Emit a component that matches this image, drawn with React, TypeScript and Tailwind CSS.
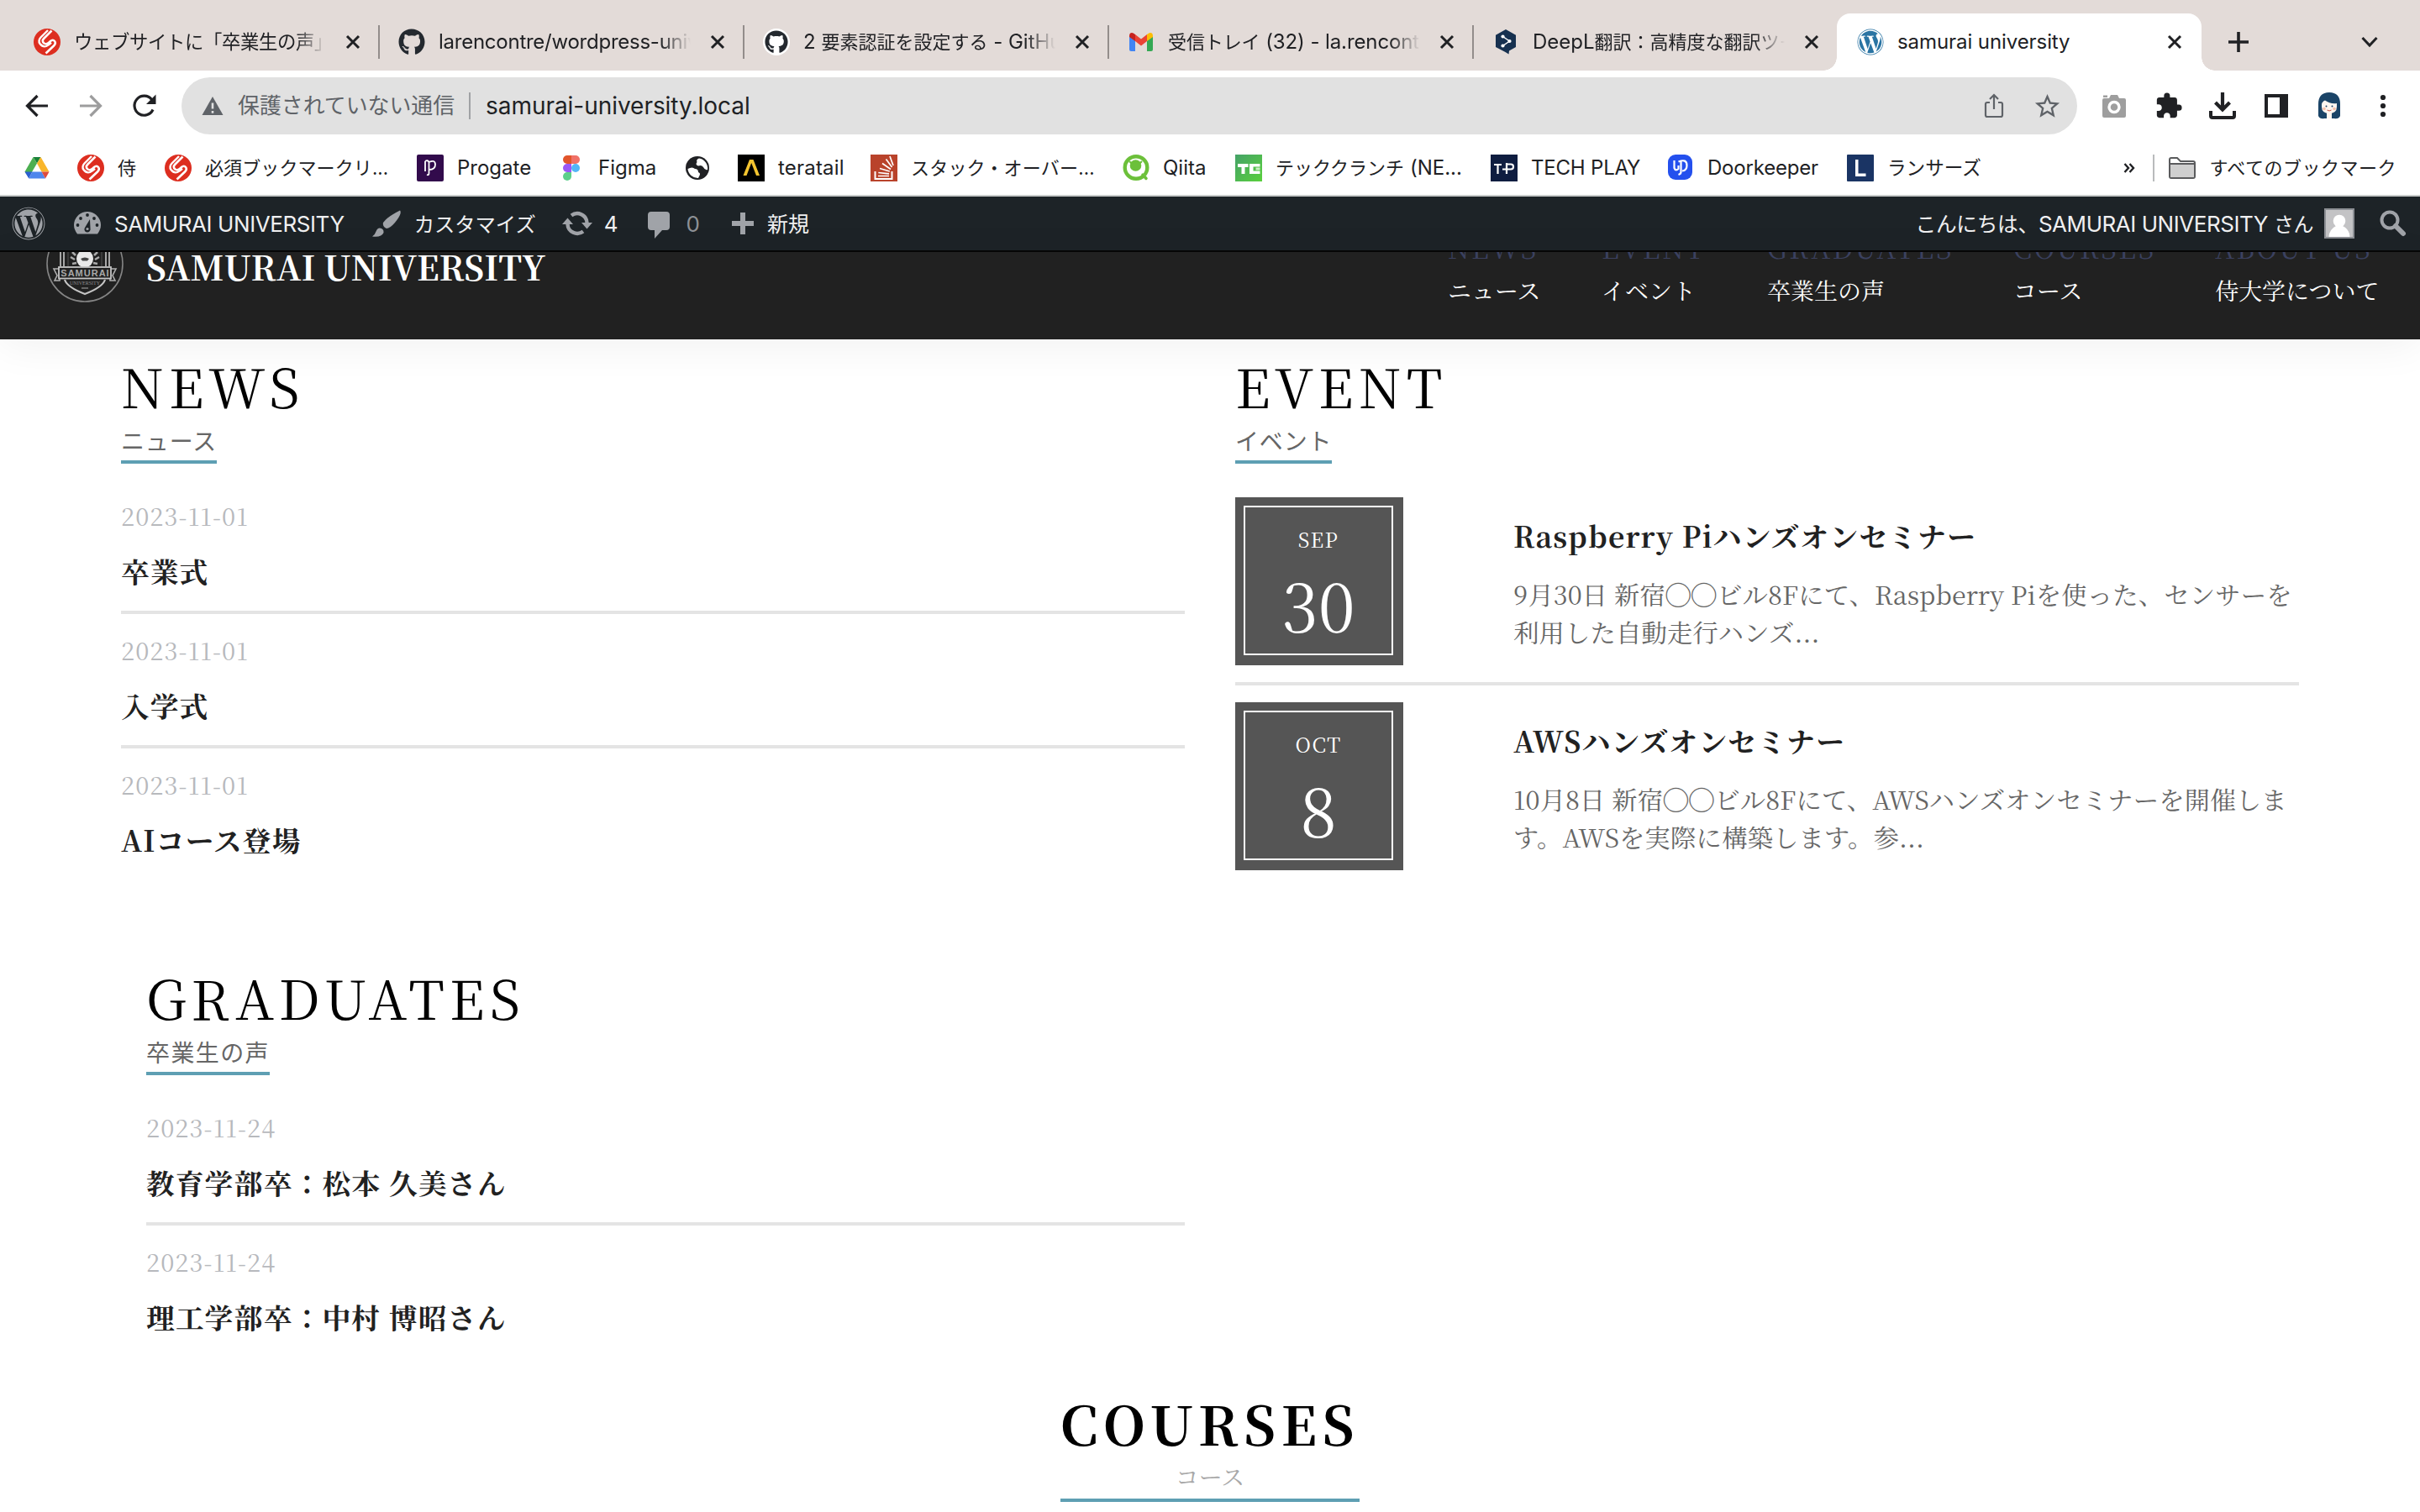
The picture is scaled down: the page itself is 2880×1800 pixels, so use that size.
import type { ReactNode } from "react";
import { FaWordpress, FaGithub } from "react-icons/fa";
import { MdExtension, MdStarBorder } from "react-icons/md";

const SERIF = "font-['Noto_Serif_JP','Noto_Serif_CJK_JP','Liberation_Serif',serif]";
const SANS = "font-['Inter','Noto_Sans_CJK_JP',sans-serif]";

function J({ children }: { children: ReactNode }) {
  return <span className="text-[22px]">{children}</span>;
}

/* ---------- favicons ---------- */

function SamuraiIcon() {
  return (
    <svg viewBox="0 0 32 32" className="size-8 shrink-0">
      <circle cx="16" cy="16" r="16" fill="#dd2e20" />
      <path
        d="M21.500 2.500 L12.500 11.500 Q9 15 12.500 17.500 Q15.500 19.500 18.500 16.500 L20 15 Q23 12.500 25 15 Q27 17.500 24 20.500 L14.500 29.500"
        fill="none"
        stroke="#fff"
        strokeWidth="2.600"
      />
      <path d="M17 2 L8.500 10.500 Q5 14.500 7.500 18 Q11 22.500 15 21 Q18 19.500 21 16.800" fill="none" stroke="#fff" strokeWidth="2.400" />
    </svg>
  );
}

function GmailIcon() {
  return (
    <svg viewBox="0 0 32 32" className="size-8 shrink-0">
      <path d="M2 9 L9 14.500 V27 H4 Q2 27 2 25 Z" fill="#4285f4" />
      <path d="M30 9 L23 14.500 V27 H28 Q30 27 30 25 Z" fill="#34a853" />
      <path d="M9 7 L16 12.500 L23 7 V15 L16 20.500 L9 15 Z" fill="#ea4335" />
      <path d="M2 9 Q2 5 5 5 Q6.500 5 9 7 V15 L2 10 Z" fill="#c5221f" />
      <path d="M30 9 Q30 5 27 5 Q25.500 5 23 7 V15 L30 10 Z" fill="#fbbc04" />
    </svg>
  );
}

function DeeplIcon() {
  return (
    <svg viewBox="0 0 32 32" className="size-8 shrink-0">
      <path d="M16 1 L28 7.800 V22 L20 26.500 L19.500 30.500 L15.500 28 L4 22 V7.800 Z" fill="#16304f" />
      <path d="M12.500 9.500 L20.500 15 L12.500 20.500" fill="none" stroke="#fff" strokeWidth="1.500" />
      <circle cx="12.500" cy="9.500" r="2.100" fill="#fff" />
      <circle cx="20.500" cy="15" r="2.100" fill="#fff" />
      <circle cx="12.500" cy="20.500" r="2.100" fill="#fff" />
    </svg>
  );
}

function GithubBadge() {
  return (
    <span className="flex size-8 shrink-0 items-center justify-center rounded-full bg-white">
      <FaGithub className="size-[28px] text-[#24292f]" />
    </span>
  );
}

function DriveIcon() {
  return (
    <svg viewBox="0 0 32 32" className="size-8 shrink-0">
      <path d="M11.500 3 H20.500 L16 10.500 Z" fill="#188038" />
      <path d="M11.500 3 L16 10.500 L6.300 27 L1.500 20.500 Z" fill="#4caf50" />
      <path d="M20.500 3 L30.500 20.500 H21.500 L16 10.500 Z" fill="#f9b62b" />
      <path d="M1.500 20.500 H10.300 L6.300 28.500 Z" fill="#2b5fd0" />
      <path d="M10.300 20.500 H21.500 L26 28.500 H6.300 Z" fill="#4f86ec" />
      <path d="M21.500 20.500 H30.500 L26 28.500 Z" fill="#dd4b3e" />
    </svg>
  );
}

function ProgateIcon() {
  return (
    <svg viewBox="0 0 32 32" className="size-8 shrink-0">
      <rect width="32" height="32" rx="2" fill="#320b4c" />
      <path
        d="M10 8 V20 M10 8 Q13 6 14.500 9 V22 Q14.500 25 12 24 M14.500 9 Q22 5.500 22 12 Q22 18 14.500 18"
        fill="none"
        stroke="#fff"
        strokeWidth="1.800"
      />
    </svg>
  );
}

function FigmaIcon() {
  return (
    <svg viewBox="0 0 32 32" className="size-8 shrink-0">
      <path d="M16 1 H11 A5 5 0 0 0 11 11 H16 Z" fill="#e2552b" />
      <path d="M16 1 H21 A5 5 0 0 1 21 11 H16 Z" fill="#f07067" />
      <path d="M16 11 H11 A5 5 0 0 0 11 21 H16 Z" fill="#9a57f5" />
      <circle cx="21" cy="16" r="5" fill="#52b6f7" />
      <path d="M16 21 H11 A5 5 0 1 0 16 26 Z" fill="#5ccf8a" />
    </svg>
  );
}

function GlobeIcon() {
  return (
    <svg viewBox="0 0 32 32" className="size-8 shrink-0">
      <circle cx="16" cy="16" r="14" fill="#202124" />
      <path d="M4.500 17 Q10 14 13 17 Q17 17 17 21 Q20 22 18.500 25 L17 28 A12 12 0 0 1 4.500 17 Z" fill="#fff" />
      <path d="M18 4.500 Q14 6 15.500 9 Q13 12 17 13.500 Q21 12 23 15 Q25 19 28 18 A12 12 0 0 0 18 4.500 Z" fill="#fff" />
    </svg>
  );
}

function TeratailIcon() {
  return (
    <svg viewBox="0 0 32 32" className="size-8 shrink-0">
      <rect width="32" height="32" fill="#000" />
      <path d="M14 6 H18.500 L26 25 H22 L16.200 10 L10.500 25 H6.500 Z" fill="#f4c430" />
    </svg>
  );
}

function StackIcon() {
  return (
    <svg viewBox="0 0 32 32" className="size-8 shrink-0">
      <rect width="32" height="32" fill="#b9432b" />
      <path d="M5.500 20 V29 H25.500 V20" fill="none" stroke="#fff" strokeWidth="2" />
      <path d="M9 25.500 H22 M9.300 21.500 L22 22.800 M11 16.500 L22.800 20 M14 10.500 L24 17.500 M18.500 5.500 L25.500 15 M23 2 L27 13" stroke="#fff" strokeWidth="1.700" />
    </svg>
  );
}

function QiitaIcon() {
  return (
    <svg viewBox="0 0 32 32" className="size-8 shrink-0">
      <circle cx="16" cy="15.500" r="13.300" fill="none" stroke="#6cc03a" strokeWidth="4.400" />
      <circle cx="15.500" cy="13" r="6.800" fill="#6cc03a" />
      <path d="M8 8 L12 12 M23 8 L19 12" stroke="#6cc03a" strokeWidth="2" />
      <path d="M22.500 22 L29 29" stroke="#fff" strokeWidth="2.500" />
      <path d="M24 24 L28 28.500" stroke="#6cc03a" strokeWidth="3.500" strokeLinecap="round" />
    </svg>
  );
}

function TechCrunchIcon() {
  return (
    <svg viewBox="0 0 32 32" className="size-8 shrink-0">
      <defs>
        <linearGradient id="tc" x1="0" y1="0" x2="1" y2="1">
          <stop offset="0" stopColor="#45a268" />
          <stop offset="1" stopColor="#59d03c" />
        </linearGradient>
      </defs>
      <rect width="32" height="32" fill="url(#tc)" />
      <path d="M3 11 H15.500 V15 H11.500 V23 H7.500 V15 H3 Z M17 11 H29.500 V14.500 H21.500 V19.500 H29.500 V23 H17 Z" fill="#fff" />
      <rect x="24.500" y="15.500" width="5" height="3" fill="#c9efc4" />
    </svg>
  );
}

function TechPlayIcon() {
  return (
    <svg viewBox="0 0 32 32" className="size-8 shrink-0">
      <rect width="32" height="32" fill="#0f1d40" />
      <path d="M4 12 H13 M8.500 12 V23 M19 10 V23 M19 11.500 H24 Q27 11.500 27 14.500 Q27 17.500 24 17.500 H14" fill="none" stroke="#fff" strokeWidth="2.200" />
    </svg>
  );
}

function DoorkeeperIcon() {
  return (
    <svg viewBox="0 0 32 32" className="size-8 shrink-0">
      <rect x="1" y="0" width="29" height="30" rx="9" fill="#2450ee" />
      <path d="M8.500 7 V16 Q10 20 13.500 17 V13 M16.500 7 V21 Q16.500 23 13.500 24 M13.500 8.500 Q23.500 4.500 23.500 13 Q23.500 19 18 19.500" fill="none" stroke="#fff" strokeWidth="2.200" />
    </svg>
  );
}

function LancersIcon() {
  return (
    <svg viewBox="0 0 32 32" className="size-8 shrink-0">
      <rect width="32" height="32" rx="1" fill="#1a3464" />
      <path d="M10 6 H13.500 V22.500 H22.500 V26 H10 Z" fill="#fff" />
    </svg>
  );
}

/* ---------- tab strip ---------- */

function CloseIcon() {
  return (
    <svg viewBox="0 0 18 18" className="size-[18px] shrink-0">
      <path d="M2 2 L16 16 M16 2 L2 16" stroke="#202124" strokeWidth="3" />
    </svg>
  );
}

const tabs: { icon: ReactNode; title: ReactNode }[] = [
  { icon: <SamuraiIcon />, title: <span className="text-[22.400px] tracking-[-0.400px]">ウェブサイトに「卒業生の声」</span> },
  { icon: <FaGithub className="size-8 shrink-0 text-[#24292f]" />, title: <span className="tracking-[-0.250px]">larencontre/wordpress-university</span> },
  { icon: <GithubBadge />, title: <>2 <J>要素認証を設定する</J> - GitHub Docs</> },
  { icon: <GmailIcon />, title: <span className="tracking-[-0.100px]"><J>受信トレイ</J> (32) - la.rencontre</span> },
  { icon: <DeeplIcon />, title: <>DeepL<J>翻訳：高精度な翻訳ツール</J></> },
];

function TabStrip() {
  return (
    <div className="flex h-[84px] items-end bg-[#e3dbd8] pl-4 text-[24px] leading-none text-[#202124]">
      {tabs.map((tab, i) => (
        <div key={i} className="flex h-[68px] w-[434px] shrink-0 items-center pl-6">
          {tab.icon}
          <div className="ml-4 w-[300px] shrink-0 overflow-hidden py-1 whitespace-nowrap [mask-image:linear-gradient(to_right,black_88%,transparent)]">
            {tab.title}
          </div>
          <div className="ml-[23px] flex shrink-0">
            <CloseIcon />
          </div>
          {i < 4 && <div className="-mr-1 ml-[21px] h-10 w-[2px] shrink-0 bg-[#938d8b]" />}
        </div>
      ))}
      <div className="relative flex h-[68px] w-[434px] shrink-0 items-center rounded-t-2xl bg-white pl-6">
        <div className="absolute bottom-0 -left-4 size-4 bg-[radial-gradient(circle_at_top_left,transparent_15.500px,white_16px)]" />
        <div className="absolute -right-4 bottom-0 size-4 bg-[radial-gradient(circle_at_top_right,transparent_15.500px,white_16px)]" />
        <FaWordpress className="size-8 shrink-0 text-[#2a74a3]" />
        <div className="ml-4 flex-1 tracking-[-0.080px]">samurai university</div>
        <div className="mr-[23px] flex">
          <CloseIcon />
        </div>
      </div>
      <div className="flex h-[68px] flex-1 items-center justify-between pr-[50px] pl-[31px]">
        <svg viewBox="0 0 26 26" className="size-[26px]">
          <path d="M13 1 V25 M1 13 H25" stroke="#202124" strokeWidth="3.600" />
        </svg>
        <svg viewBox="0 0 20 14" className="h-[14px] w-5">
          <path d="M1.500 2 L10 11 L18.500 2" fill="none" stroke="#202124" strokeWidth="3" />
        </svg>
      </div>
    </div>
  );
}

/* ---------- toolbar ---------- */

function Toolbar() {
  return (
    <div className="flex h-[84px] items-center bg-white pr-7 pl-[28px]">
      <svg viewBox="0 0 32 32" className="size-8">
        <path d="M29 16 H5 M16.500 4 L4.500 16 L16.500 28" fill="none" stroke="#202124" strokeWidth="3.200" />
      </svg>
      <svg viewBox="0 0 32 32" className="ml-8 size-8">
        <path d="M3 16 H27 M15.500 4 L27.500 16 L15.500 28" fill="none" stroke="#9d9d9e" strokeWidth="3.200" />
      </svg>
      <svg viewBox="0 0 32 32" className="ml-8 size-8">
        <path d="M26 20.500 A11.500 11.500 0 1 1 24.500 8.500" fill="none" stroke="#202124" strokeWidth="3.200" />
        <path d="M29.500 2.500 V14 H18 Z" fill="#202124" />
      </svg>
      <div className="ml-[28px] flex h-[68px] w-[2256px] items-center rounded-full bg-[#e1e1e1] pr-[18px] pl-6 text-[28px] leading-none text-[#202124]">
        <svg viewBox="0 0 26 22" className="h-[22px] w-[26px]">
          <path d="M13 0 L25.500 22 H0.500 Z" fill="#5f6368" />
          <path d="M13 7.500 V14.500 M13 17 V19.700" stroke="#e1e1e1" strokeWidth="2.600" />
        </svg>
        <span className="ml-[17px] w-[258px] text-[25.900px] whitespace-nowrap text-[#5f6368]">保護されていない通信</span>
        <div className="ml-[17px] h-8 w-[2px] bg-[#a0a2a5]" />
        <span className="ml-[18px] flex-1 tracking-[-0.040px]">samurai-university.local</span>
        <svg viewBox="0 0 32 32" className="size-8">
          <path d="M11 12 H8 Q6 12 6 14 V27 Q6 29 8 29 H24 Q26 29 26 27 V14 Q26 12 24 12 H21" fill="none" stroke="#5f6368" strokeWidth="2.200" />
          <path d="M16 20 V3 M11 8 L16 3 L21 8" fill="none" stroke="#5f6368" strokeWidth="2.200" />
        </svg>
        <MdStarBorder className="ml-[30px] size-[35px] text-[#5f6368]" />
      </div>
      <div className="ml-[28px] flex flex-1 items-center justify-between">
        <svg viewBox="0 0 32 32" className="size-8">
          <path d="M2 9 Q2 7 4 7 H10 L12 3 H20 L22 7 H28 Q30 7 30 9 V28 Q30 30 28 30 H4 Q2 30 2 28 Z" fill="#9e9e9e" />
          <path d="M3 3.500 H8 V6 H3 Z" fill="#9e9e9e" />
          <circle cx="16" cy="17.500" r="6" fill="none" stroke="#fff" strokeWidth="3.400" />
        </svg>
        <MdExtension className="size-[34px] text-[#202124]" />
        <svg viewBox="0 0 32 32" className="size-8">
          <path d="M16 0 V19 M7.500 12 L16 20.500 L24.500 12" fill="none" stroke="#202124" strokeWidth="4.200" />
          <path d="M2 22 V28 Q2 30 4 30 H28 Q30 30 30 28 V22" fill="none" stroke="#202124" strokeWidth="4" />
        </svg>
        <svg viewBox="0 0 32 32" className="size-8">
          <path d="M2 2 H30 V30 H2 Z M6 6 V26 H20 V6 Z" fill="#202124" fillRule="evenodd" />
        </svg>
        <svg viewBox="0 0 32 32" className="size-8">
          <path d="M3 28 V14 Q3 0 16 0 Q29 0 29 14 V28 Q27 32 22 31 H10 Q5 32 3 28 Z" fill="#1b4467" />
          <path d="M7 14 Q7.500 11 11 9.500 Q17 14 25 13 V17 Q25 25 16 25 Q7 25 7 17 Z" fill="#fff6f0" />
          <path d="M13 24 H19 V31 H13 Z" fill="#fff6f0" />
          <circle cx="12.500" cy="16.500" r="1" fill="#1b4467" />
          <circle cx="19.500" cy="16.500" r="1" fill="#1b4467" />
          <circle cx="10" cy="19.500" r="1.800" fill="#f6c2ab" />
          <circle cx="22" cy="19.500" r="1.800" fill="#f6c2ab" />
          <path d="M13.500 21 Q16 23 18.500 21" stroke="#c7523f" strokeWidth="1" fill="none" />
        </svg>
        <svg viewBox="0 0 32 32" className="size-8">
          <circle cx="16" cy="6" r="3.100" fill="#202124" />
          <circle cx="16" cy="16" r="3.100" fill="#202124" />
          <circle cx="16" cy="26" r="3.100" fill="#202124" />
        </svg>
      </div>
    </div>
  );
}

/* ---------- bookmarks ---------- */

const bookmarks: { icon: ReactNode; label: ReactNode; width: string }[] = [
  { icon: <DriveIcon />, label: "", width: "w-[64px]" },
  { icon: <SamuraiIcon />, label: <J>侍</J>, width: "w-[104px]" },
  { icon: <SamuraiIcon />, label: <span className="text-[22px] tracking-[0.100px]">必須ブックマークリ...</span>, width: "w-[300px]" },
  { icon: <ProgateIcon />, label: "Progate", width: "w-[168px]" },
  { icon: <FigmaIcon />, label: "Figma", width: "w-[150px]" },
  { icon: <GlobeIcon />, label: "", width: "w-[64px]" },
  { icon: <TeratailIcon />, label: <span className="tracking-[0.200px]">teratail</span>, width: "w-[158px]" },
  { icon: <StackIcon />, label: <span className="text-[22px] tracking-[0.200px]">スタック・オーバー...</span>, width: "w-[300px]" },
  { icon: <QiitaIcon />, label: "Qiita", width: "w-[134px]" },
  { icon: <TechCrunchIcon />, label: <><J>テッククランチ</J> (NE...</>, width: "w-[304px]" },
  { icon: <TechPlayIcon />, label: <span className="tracking-[-0.200px]">TECH PLAY</span>, width: "w-[210px]" },
  { icon: <DoorkeeperIcon />, label: <span className="tracking-[-0.200px]">Doorkeeper</span>, width: "w-[214px]" },
  { icon: <LancersIcon />, label: <span className="text-[22.600px]">ランサーズ</span>, width: "w-[170px]" },
];

function BookmarksBar() {
  return (
    <div className="flex h-[66px] items-center border-b-2 border-[#c9cccb] bg-white pr-7 pl-7 text-[24px] leading-none text-[#202124]">
      <div className="flex flex-1">
        {bookmarks.map((b, i) => (
          <div key={i} className={`flex shrink-0 items-center gap-4 whitespace-nowrap ${b.width}`}>
            {b.icon}
            <span>{b.label}</span>
          </div>
        ))}
      </div>
      <svg viewBox="0 0 14 14" className="size-[14px]">
        <path d="M1.500 2 L6 7 L1.500 12 M7.500 2 L12 7 L7.500 12" fill="none" stroke="#202124" strokeWidth="2.400" />
      </svg>
      <div className="ml-[21px] h-8 w-[2px] bg-[#b9bbbc]" />
      <svg viewBox="0 0 32 26" className="ml-[17px] h-[26px] w-8">
        <path d="M1 3 Q1 1 3 1 H10 L14 5 H29 Q31 5 31 7 V23 Q31 25 29 25 H3 Q1 25 1 23 Z" fill="#fff" stroke="#5a5b5d" strokeWidth="2" />
        <path d="M2 8 H30 V24 H2 Z" fill="#cfcfcf" />
        <path d="M1 8 H31" stroke="#5a5b5d" strokeWidth="2" />
      </svg>
      <span className="ml-4 text-[22px] tracking-[0.500px] whitespace-nowrap">すべてのブックマーク</span>
    </div>
  );
}

/* ---------- WordPress admin bar ---------- */

function AdminBar() {
  return (
    <div className="flex h-[66px] border-b-2 border-[#060607] bg-[#1d2327] text-[26px] leading-none text-[#f0f0f1]">
      <div className="flex flex-1 items-center pl-[14px]">
        <FaWordpress className="size-10 text-[#a0a3a8]" />
        <svg viewBox="0 0 32 28" className="ml-[34px] h-7 w-8">
          <path d="M4 26.500 Q0 21 0 16 A16 16 0 0 1 32 16 Q32 21 28 26.500 Z" fill="#a0a3a8" />
          <g fill="#1d2327">
            <circle cx="16" cy="4" r="1.900" />
            <circle cx="8" cy="8" r="1.900" />
            <circle cx="24" cy="8" r="1.900" />
            <circle cx="4.500" cy="16" r="1.900" />
            <circle cx="27.500" cy="16" r="1.900" />
            <path d="M19 9 L19.500 20 A3.600 3.600 0 1 1 13 19 Z" />
          </g>
          <circle cx="16" cy="20.500" r="1.600" fill="#a0a3a8" />
        </svg>
        <span className="ml-4 pt-[2px] tracking-[-0.420px]">SAMURAI UNIVERSITY</span>
        <svg viewBox="0 0 34 32" className="ml-[33px] h-8 w-[34px]">
          <path d="M33 0.500 Q36 4 27 15 Q21 22 17 22 Q12 20 13 15 Q18 8 33 0.500 Z" fill="#a0a3a8" />
          <path d="M9 21.500 Q14 22 13.500 27 Q11 33 0 31.500 Q3.500 29 4.500 25.500 Q6 21.500 9 21.500 Z" fill="#a0a3a8" />
        </svg>
        <span className="ml-4 pt-[2px] text-[24.300px]">カスタマイズ</span>
        <svg viewBox="0 0 36 30" className="ml-[31px] h-[30px] w-9">
          <path d="M11 5.500 A11.500 11.500 0 0 1 29.500 14" fill="none" stroke="#a0a3a8" strokeWidth="4.400" />
          <path d="M23 14 H36 L29.500 21.500 Z" fill="#a0a3a8" />
          <path d="M25 24.500 A11.500 11.500 0 0 1 6.500 16" fill="none" stroke="#a0a3a8" strokeWidth="4.400" />
          <path d="M0 16 H13 L6.500 8.500 Z" fill="#a0a3a8" />
        </svg>
        <span className="ml-[14px] pt-[2px]">4</span>
        <svg viewBox="0 0 26 32" className="mt-1 ml-[35px] h-8 w-[26px]">
          <path d="M4 0 H22 Q26 0 26 4 V18 Q26 22 22 22 H17 L8 32 V22 H4 Q0 22 0 18 V4 Q0 0 4 0 Z" fill="#a0a3a8" />
        </svg>
        <span className="ml-5 pt-[2px] text-[#8d9196]">0</span>
        <svg viewBox="0 0 26 26" className="ml-[38px] size-[26px]">
          <path d="M13 0 V26 M0 13 H26" stroke="#a0a3a8" strokeWidth="6" />
        </svg>
        <span className="ml-4 pt-[2px] text-[25px]">新規</span>
      </div>
      <div className="flex items-center pr-[16px]">
        <span className="pt-[2px] tracking-[-0.450px]">
          <span className="text-[24.700px] tracking-[-0.300px]">こんにちは、</span>SAMURAI UNIVERSITY <span className="text-[24px]">さん</span>
        </span>
        <svg viewBox="0 0 36 36" className="ml-[13px] size-9">
          <rect x="1" y="1" width="34" height="34" fill="#c3c3c5" stroke="#8c8f94" strokeWidth="2" />
          <circle cx="18" cy="15" r="7.300" fill="#fff" />
          <path d="M5.500 34 Q6 25 14 21 H22 Q30 25 30.500 34 Z" fill="#fff" />
        </svg>
        <svg viewBox="0 0 32 32" className="ml-[30px] size-8">
          <circle cx="12" cy="12" r="9.500" fill="none" stroke="#a0a3a8" strokeWidth="4" />
          <path d="M19 19 L28 28" stroke="#a0a3a8" strokeWidth="6" strokeLinecap="round" />
        </svg>
      </div>
    </div>
  );
}

/* ---------- site ---------- */

function Crest() {
  return (
    <svg viewBox="0 0 92 92" className="-mt-[32px] size-[92px]" fill="none">
      <circle cx="46" cy="46" r="45" stroke="#858585" strokeWidth="1.600" />
      <path d="M17 12 V49 M21 12 V49 M71 12 V49 M75 12 V49" stroke="#b5b5b5" strokeWidth="1.800" />
      <path d="M26 20 V49 M66 20 V49" stroke="#555" strokeWidth="1" />
      <ellipse cx="46" cy="40" rx="10" ry="10.500" fill="#e8e8e8" />
      <path d="M41 40 Q46 37 51 40 L49 42.500 H43 Z" fill="#444" />
      <path d="M31 32 L35 36 M29 38 L34 41 M31 46 L36 45 M61 32 L57 36 M63 38 L58 41 M61 46 L56 45" stroke="#aaa" strokeWidth="2.600" />
      <path d="M9 52 H16 V66 H10 L13 60 Z M83 52 H76 V66 H82 L79 60 Z" stroke="#b0b0b0" strokeWidth="1.600" />
      <rect x="15" y="50" width="62" height="13.500" fill="#212121" stroke="#c4c4c4" strokeWidth="1.800" />
      <text x="46.500" y="61" textAnchor="middle" fontSize="11" fontWeight="700" fontFamily="Liberation Sans" letterSpacing="1" fill="#a8a8a8">
        SAMURAI
      </text>
      <path d="M22 65 Q25 74 46 82 Q67 74 70 65" stroke="#c4c4c4" strokeWidth="2.200" />
      <text x="46" y="70.500" textAnchor="middle" fontSize="6" fontFamily="Liberation Serif" fill="#8a8a8a">
        UNIVERSITY
      </text>
      <path d="M42 75 H50" stroke="#777" strokeWidth="1.600" />
    </svg>
  );
}

const nav = [
  { en: "NEWS", ja: "ニュース", width: "w-[183px]" },
  { en: "EVENT", ja: "イベント", width: "w-[197px]" },
  { en: "GRADUATES", ja: "卒業生の声", width: "w-[293px]" },
  { en: "COURSES", ja: "コース", width: "w-[240px]" },
  { en: "ABOUT US", ja: "侍大学について", width: "w-[244px]" },
];

function SiteHeader() {
  return (
    <header className="relative z-10 h-[104px] bg-[#212121] shadow-[0_8px_50px_rgba(0,0,0,0.060)]">
      <div className="flex h-full items-start justify-between overflow-hidden pl-[55px]">
        <div className="flex items-start">
          <Crest />
          <div className="-mt-[3px] ml-[27px] text-[40px] leading-none font-bold tracking-[-0.060px] text-white">SAMURAI UNIVERSITY</div>
        </div>
        <nav className="-mt-[22px] flex">
          {nav.map((n) => (
            <div key={n.en} className={`flex flex-col gap-[21px] whitespace-nowrap ${n.width}`}>
              <span className="text-[32px] leading-none tracking-[2.700px] text-[#3b4160]">{n.en}</span>
              <span className="text-[28px] leading-none text-white">{n.ja}</span>
            </div>
          ))}
        </nav>
      </div>
    </header>
  );
}

function SectionTitle({ en, ja }: { en: string; ja: string }) {
  return (
    <div className="flex flex-col items-start">
      <h2 className="text-[64px] leading-none tracking-[6.200px] text-black">{en}</h2>
      <p
        className={`mt-[22px] border-b-4 border-[#5e9fb3] pb-[8px] text-[28px] leading-none text-[#666] ${SANS} ${
          ja === "卒業生の声" ? "tracking-[1.400px]" : "tracking-[0.850px]"
        }`}
      >
        {ja}
      </p>
    </div>
  );
}

function PostList({ posts }: { posts: { date: string; title: string }[] }) {
  return (
    <ul className="mt-[19px] divide-y-4 divide-[#e4e4e4]">
      {posts.map((p) => (
        <li key={p.title} className="flex flex-col gap-[35px] pt-[28px] pb-[31px]">
          <time className="text-[28.800px] leading-[29px] tracking-[1.100px] text-[#b7b9bd]">{p.date}</time>
          <h3 className="text-[33.700px] leading-[33px] font-bold tracking-[1.220px] text-[#212121]">{p.title}</h3>
        </li>
      ))}
    </ul>
  );
}

const events = [
  {
    month: "SEP",
    day: "30",
    title: "Raspberry Piハンズオンセミナー",
    lines: ["9月30日 新宿◯◯ビル8Fにて、Raspberry Piを使った、センサーを", "利用した自動走行ハンズ..."],
  },
  {
    month: "OCT",
    day: "8",
    title: "AWSハンズオンセミナー",
    lines: ["10月8日 新宿◯◯ビル8Fにて、AWSハンズオンセミナーを開催しま", "す。AWSを実際に構築します。参..."],
  },
];

function EventList() {
  return (
    <ul className="mt-10 flex flex-col gap-5">
      {events.map((e, i) => (
        <li key={e.month} className={i === 0 ? "flex border-b-4 border-[#e4e4e4] pb-5" : "flex"}>
          <div className="size-[200px] shrink-0 bg-[#555] p-[10px] text-white">
            <div className="flex size-[178px] flex-col items-center border-2 border-white pt-[26px]">
              <span className="text-[24px] leading-none tracking-[1.280px]">{e.month}</span>
              <span className="mt-[25px] text-[78px] leading-[80px]">{e.day}</span>
            </div>
          </div>
          <div className="ml-[131px] pt-[29px] whitespace-nowrap">
            <h3 className="text-[33.700px] leading-[34px] font-bold tracking-[1.250px] text-[#212121]">{e.title}</h3>
            <p className="mt-[30px] text-[30.400px] leading-[45px] tracking-[0.090px] text-[#666]">
              {e.lines[0]}
              <br />
              {e.lines[1]}
            </p>
          </div>
        </li>
      ))}
    </ul>
  );
}

export default function App() {
  return (
    <div lang="ja" className={`h-[1800px] w-[2880px] overflow-hidden bg-white ${SANS}`}>
      <TabStrip />
      <Toolbar />
      <BookmarksBar />
      <AdminBar />
      <div className={SERIF}>
        <SiteHeader />
        <main className="px-36 pt-[22px]">
          <div className="grid h-[728px] grid-cols-2 gap-[60px]">
            <section>
              <SectionTitle en="NEWS" ja="ニュース" />
              <PostList
                posts={[
                  { date: "2023-11-01", title: "卒業式" },
                  { date: "2023-11-01", title: "入学式" },
                  { date: "2023-11-01", title: "AIコース登場" },
                ]}
              />
            </section>
            <section>
              <SectionTitle en="EVENT" ja="イベント" />
              <EventList />
            </section>
          </div>
          <div className="grid h-[507px] grid-cols-2 gap-[60px]">
            <section className="pl-[30px]">
              <SectionTitle en="GRADUATES" ja="卒業生の声" />
              <PostList
                posts={[
                  { date: "2023-11-24", title: "教育学部卒：松本 久美さん" },
                  { date: "2023-11-24", title: "理工学部卒：中村 博昭さん" },
                ]}
              />
            </section>
          </div>
          <section className="flex justify-center">
            <div className="flex flex-col items-center border-b-4 border-[#5e9fb3]">
              <h2 className="text-[64px] leading-none font-bold tracking-[6.400px] text-black">COURSES</h2>
              <p className="mt-[18px] pb-[13px] text-[28px] leading-none text-[#a8a8a8]">コース</p>
            </div>
          </section>
        </main>
      </div>
    </div>
  );
}
